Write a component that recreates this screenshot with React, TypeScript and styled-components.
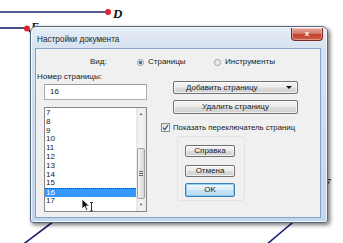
import React from "react";
import styled, { createGlobalStyle } from "styled-components";

const Global = createGlobalStyle`
  html, body { margin: 0; padding: 0; background: #fff; }
  body { overflow: hidden; }
  #root { width: 343px; height: 243px; }
`;

const Scene = styled.div`
  position: relative;
  width: 343px;
  height: 243px;
  overflow: hidden;
  background: #fff;
  font-family: "Liberation Sans", Arial, sans-serif;
  color: #1a1a1a;
`;

const Diagram = styled.svg`
  position: absolute;
  left: 0;
  top: 0;
  width: 343px;
  height: 243px;
`;

const Window = styled.div`
  position: absolute;
  left: 30px;
  top: 26px;
  width: 298px;
  height: 197px;
  box-sizing: border-box;
  border: 1px solid #56677f;
  border-radius: 6px 6px 3px 3px;
  background: linear-gradient(180deg, #e6edf6 0%, #d6e2ef 22px, #c4d6eb 100%);
  box-shadow: 2px 2px 4px rgba(0, 0, 0, 0.55), inset 0 0 0 1px rgba(255, 255, 255, 0.75);
  display: flex;
  flex-direction: column;
`;

const TitleBar = styled.div`
  height: 21px;
  display: flex;
  align-items: flex-start;
  padding: 0 4px 0 6px;
  flex-shrink: 0;
`;

const Title = styled.div`
  font-size: 8.2px;
  line-height: 10px;
  margin-top: 8px;
  color: #1e1e1e;
`;

const CloseButton = styled.div`
  margin-left: auto;
  margin-top: 1px;
  width: 32px;
  height: 13px;
  box-sizing: border-box;
  border: 1px solid #7a2a24;
  border-top: none;
  border-radius: 0 0 4px 4px;
  background: linear-gradient(180deg, #e9a99e 0%, #d4796b 45%, #c2412f 55%, #cf5d45 100%);
  box-shadow: inset 0 0 0 1px rgba(255, 255, 255, 0.35);
  display: flex;
  align-items: center;
  justify-content: center;
  color: #fff;
  font-size: 8px;
  font-weight: bold;
  line-height: 1;
`;

const Client = styled.div`
  flex: 1;
  margin: 0 6px 4px 4px;
  background: #f0f0f0;
  border: 1px solid #86a2ca;
  display: flex;
  flex-direction: column;
  font-size: 8px;
`;

const ViewRow = styled.div`
  display: flex;
  align-items: center;
  height: 10px;
  margin-top: 8px;
  padding-left: 54px;
`;

const ViewLabel = styled.div`
  width: 47px;
  line-height: 10px;
`;

const RadioOption = styled.div<{ $w: number }>`
  width: ${(p) => p.$w}px;
  display: flex;
  align-items: center;
  gap: 4px;
  line-height: 10px;
`;

const Radio = styled.span<{ $on?: boolean }>`
  width: 7px;
  height: 7px;
  box-sizing: border-box;
  border-radius: 50%;
  border: 1px solid #9a9c9e;
  background: ${(p) =>
    p.$on
      ? "radial-gradient(circle, #2c5aa8 0%, #4f86c9 40%, #dde6ee 50%, #f4f4f4 100%)"
      : "radial-gradient(circle, #e6e6e6 0%, #f8f8f8 100%)"};
`;

const Body = styled.div`
  display: flex;
  align-items: flex-start;
`;

const LeftCol = styled.div`
  width: 111px;
  display: flex;
  flex-direction: column;
`;

const FieldLabel = styled.div`
  margin-top: 5px;
  padding-left: 1px;
  line-height: 10px;
`;

const TextInput = styled.div`
  margin: 2px 0 0 8px;
  width: 103px;
  height: 16px;
  box-sizing: border-box;
  border: 1px solid #abadb3;
  border-top-color: #9a9ca3;
  background: #fff;
  padding-left: 5px;
  line-height: 14px;
`;

const ListBox = styled.div`
  margin: 7px 0 0 8px;
  width: 103px;
  height: 105px;
  box-sizing: border-box;
  border: 1px solid #828790;
  background: #fff;
  display: flex;
`;

const Items = styled.div`
  flex: 1;
  padding-top: 1px;
  overflow: hidden;
`;

const Item = styled.div<{ $sel?: boolean }>`
  height: 8.8px;
  line-height: 8.8px;
  padding-left: 1px;
  box-sizing: border-box;
  background: ${(p) => (p.$sel ? "#3399ff" : "transparent")};
  color: ${(p) => (p.$sel ? "#fff" : "#1a1a1a")};
  border-top: ${(p) => (p.$sel ? "1px dotted #444" : "none")};
`;

const ScrollBar = styled.div`
  width: 10px;
  display: flex;
  flex-direction: column;
  background: linear-gradient(90deg, #e8e8e8, #f5f5f5 50%, #e8e8e8);
`;

const ScrollArrow = styled.div`
  height: 12px;
  display: flex;
  align-items: center;
  justify-content: center;
  color: #4d4d4d;
  font-size: 4px;
  line-height: 1;
`;

const Track = styled.div`
  flex: 1;
  padding-top: 28px;
  display: flex;
  flex-direction: column;
`;

const Thumb = styled.div`
  height: 51px;
  margin: 0 1px;
  box-sizing: border-box;
  border: 1px solid #a2a2a2;
  border-radius: 2px;
  background: linear-gradient(90deg, #f2f2f2, #e2e2e2 60%, #d6d6d6);
  display: flex;
  flex-direction: column;
  align-items: center;
  justify-content: center;
  gap: 1px;
`;

const Grip = styled.span`
  width: 4px;
  height: 1px;
  background: #666;
`;

const RightCol = styled.div`
  margin-left: 14px;
  padding-top: 14px;
  display: flex;
  flex-direction: column;
  align-items: flex-start;
`;

const WideButton = styled.div<{ $h: number; $mt: number }>`
  margin: ${(p) => p.$mt}px 0 0 12px;
  width: 125px;
  height: ${(p) => p.$h}px;
  box-sizing: border-box;
  border: 1px solid #707070;
  border-radius: 2px;
  background: linear-gradient(180deg, #f3f3f3 0%, #ebebeb 48%, #dddddd 52%, #cfcfcf 100%);
  box-shadow: inset 0 0 0 1px rgba(255, 255, 255, 0.7);
  display: flex;
  align-items: center;
  justify-content: center;
  line-height: 1;
`;

const SplitText = styled.span`
  flex: 1;
  padding-left: 12px;
`;

const DropArrow = styled.span`
  width: 0;
  height: 0;
  margin-right: 5px;
  border-left: 3px solid transparent;
  border-right: 3px solid transparent;
  border-top: 3px solid #111;
`;

const CheckRow = styled.div`
  margin-top: 9px;
  height: 9px;
  display: flex;
  align-items: center;
  gap: 3px;
  line-height: 9px;
  font-size: 7.8px;
`;

const CheckBox = styled.span`
  width: 9px;
  height: 9px;
  box-sizing: border-box;
  border: 1px solid #8e8f8f;
  background: linear-gradient(135deg, #dcdcdc, #fafafa);
  display: flex;
  align-items: center;
  justify-content: center;
`;

const Group = styled.div`
  margin: 4px 0 0 16px;
  width: 68px;
  height: 65px;
  box-sizing: border-box;
  border: 1px solid #e3e3e3;
  border-radius: 3px;
  padding: 8px 0 0 7px;
  display: flex;
  flex-direction: column;
  gap: 8px;
`;

const SmallButton = styled.div<{ $def?: boolean }>`
  width: 50px;
  height: ${(p) => (p.$def ? 14 : 12)}px;
  margin-top: ${(p) => (p.$def ? -2 : 0)}px;
  box-sizing: border-box;
  border: 1px solid ${(p) => (p.$def ? "#3c7fb1" : "#707070")};
  border-radius: 2px;
  background: ${(p) =>
    p.$def
      ? "linear-gradient(180deg, #eef7fd 0%, #dcecf8 48%, #c9e3f6 52%, #bcdcf3 100%)"
      : "linear-gradient(180deg, #f3f3f3 0%, #ebebeb 48%, #dddddd 52%, #cfcfcf 100%)"};
  box-shadow: inset 0 0 0 1px ${(p) => (p.$def ? "rgba(120,200,245,0.8)" : "rgba(255,255,255,0.7)")};
  display: flex;
  align-items: center;
  justify-content: center;
  line-height: 1;
`;

const Cursor = styled.svg`
  position: absolute;
  left: 81px;
  top: 198px;
  width: 14px;
  height: 15px;
`;

const pages = [7, 8, 9, 10, 11, 12, 13, 14, 15, 16, 17];

export default function App() {
  return (
    <Scene>
      <Global />
      <Diagram viewBox="0 0 343 243">
        <g stroke="#1c206e" strokeWidth="1.6" fill="none">
          <line x1="0" y1="12" x2="107" y2="12" />
          <line x1="0" y1="28" x2="27" y2="28" />
          <line x1="27" y1="28" x2="55" y2="62" />
          <line x1="66" y1="212" x2="21" y2="246" />
          <line x1="305" y1="212" x2="266" y2="245" />
        </g>
        <circle cx="108" cy="12" r="3" fill="#e0242b" />
        <circle cx="27" cy="28.5" r="3" fill="#e0242b" />
        <g fontFamily="'Liberation Serif', serif" fontWeight="bold" fontStyle="italic" fill="#111">
          <text x="113" y="17.5" fontSize="13">D</text>
          <text x="31" y="31" fontSize="12">E</text>
          <text x="323" y="187" fontSize="12">F</text>
        </g>
      </Diagram>

      <Window>
        <TitleBar>
          <Title>Настройки документа</Title>
          <CloseButton>x</CloseButton>
        </TitleBar>
        <Client>
          <ViewRow>
            <ViewLabel>Вид:</ViewLabel>
            <RadioOption $w={77}>
              <Radio $on />
              Страницы
            </RadioOption>
            <RadioOption $w={70}>
              <Radio />
              Инструменты
            </RadioOption>
          </ViewRow>
          <Body>
            <LeftCol>
              <FieldLabel>Номер страницы:</FieldLabel>
              <TextInput>16</TextInput>
              <ListBox>
                <Items>
                  {pages.map((p) => (
                    <Item key={p} $sel={p === 16}>
                      {p}
                    </Item>
                  ))}
                </Items>
                <ScrollBar>
                  <ScrollArrow>▲</ScrollArrow>
                  <Track>
                    <Thumb>
                      <Grip />
                      <Grip />
                      <Grip />
                    </Thumb>
                  </Track>
                  <ScrollArrow>▼</ScrollArrow>
                </ScrollBar>
              </ListBox>
            </LeftCol>
            <RightCol>
              <WideButton $h={13} $mt={0}>
                <SplitText>Добавить страницу</SplitText>
                <DropArrow />
              </WideButton>
              <WideButton $h={14} $mt={6}>
                Удалить страницу
              </WideButton>
              <CheckRow>
                <CheckBox>
                  <svg width="7" height="7" viewBox="0 0 7 7">
                    <path d="M1 3.6 L2.8 5.6 L6 1.2" stroke="#3d5a98" strokeWidth="1.3" fill="none" />
                  </svg>
                </CheckBox>
                Показать переключатель страниц
              </CheckRow>
              <Group>
                <SmallButton>Справка</SmallButton>
                <SmallButton>Отмена</SmallButton>
                <SmallButton $def>OK</SmallButton>
              </Group>
            </RightCol>
          </Body>
        </Client>
      </Window>

      <Cursor viewBox="0 0 14 15">
        <path d="M1 1 L1 11 L3.5 8.6 L5.3 12.4 L6.8 11.7 L5 8 L8.4 8 Z" fill="#111" stroke="#fff" strokeWidth="0.8" />
        <path d="M9 4.5 H12 M10.5 4.5 V13 M9 13 H12" stroke="#333" strokeWidth="1" fill="none" />
      </Cursor>
    </Scene>
  );
}
